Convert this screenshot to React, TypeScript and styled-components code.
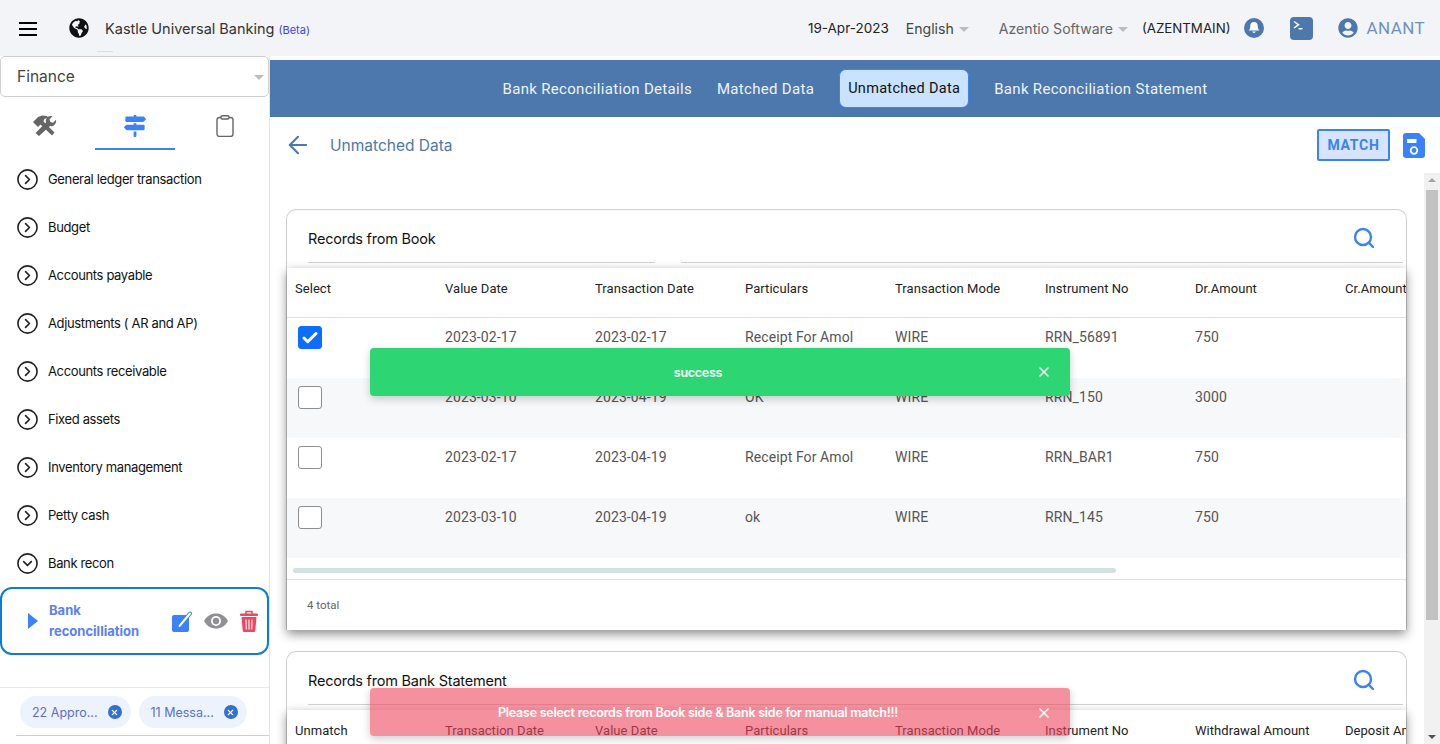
import * as React from 'react';
import styled, { createGlobalStyle } from 'styled-components';
import { FaGlobeAmericas, FaMapSigns, FaUserCircle } from 'react-icons/fa';
import { ArrowLeft, Check, CircleChevronDown, CircleChevronRight, Search, X } from 'lucide-react';

const GlobalStyle = createGlobalStyle`
  html, body {
    margin: 0;
    height: 100%;
    overflow: hidden;
    background: #fff;
    font-family: 'Roboto', 'Liberation Sans', sans-serif;
  }
  * { box-sizing: border-box; }
`;

const Page = styled.div`
  position: relative;
  width: 1440px;
  height: 744px;
  overflow: hidden;
  display: flex;
  flex-direction: column;
`;

const Header = styled.header`
  position: relative;
  flex: 0 0 56px;
  background: #f3f4f8;
  display: flex;
  align-items: center;
  padding: 0 15px 0 19px;
  &::after {
    content: '';
    position: absolute;
    left: 97px;
    top: 51px;
    width: 16px;
    height: 1px;
    background: #dcdcdc;
  }
`;

const Burger = styled.div`
  width: 18px;
  height: 14px;
  margin-top: 1px;
  border-top: 2px solid #000;
  border-bottom: 2px solid #000;
  position: relative;
  &::after {
    content: '';
    position: absolute;
    left: 0;
    right: 0;
    top: 4px;
    height: 2px;
    background: #000;
  }
`;

const Globe = styled.span`
  display: flex;
  margin-left: 32px;
  font-size: 20px;
  color: #111;
`;

const Brand = styled.div`
  margin-left: 16px;
  font-family: 'Inter', sans-serif;
  font-size: 14.5px;
  color: #333;
  white-space: nowrap;
  small {
    margin-left: 4px;
    font-size: 11px;
    color: #3f3ff0;
  }
`;

const HeaderRight = styled.div`
  margin-left: auto;
  display: flex;
  align-items: center;
`;

const HeaderText = styled.span<{ $gap: number; $size?: number; $color?: string }>`
  margin-left: ${p => p.$gap}px;
  font-family: 'Inter', sans-serif;
  font-size: ${p => p.$size || 14}px;
  color: ${p => p.$color || '#444'};
  white-space: nowrap;
  display: flex;
  align-items: center;
`;

const Caret = styled.i`
  margin-left: 5px;
  margin-top: 2px;
  width: 0;
  height: 0;
  border-left: 5px solid transparent;
  border-right: 5px solid transparent;
  border-top: 5px solid #bdbdbd;
`;

const IconSlot = styled.span<{ $gap: number; $size: number }>`
  margin-left: ${p => p.$gap}px;
  display: flex;
  font-size: ${p => p.$size}px;
  color: #4d78ad;
`;

const Username = styled.span`
  margin-left: 9px;
  font-family: 'Roboto', sans-serif;
  font-size: 17px;
  letter-spacing: 0.4px;
  color: #6f92bd;
`;

const Body = styled.div`
  flex: 1;
  min-height: 0;
  display: flex;
`;

const Sidebar = styled.aside`
  flex: 0 0 270px;
  min-width: 0;
  border-right: 1px solid #e4e4e4;
  display: flex;
  flex-direction: column;
  position: relative;
`;

const ModuleSelect = styled.div`
  height: 41px;
  width: 100%;
  flex: none;
  background: #fff;
  border: 1px solid #cfcfcf;
  border-radius: 5px;
  padding: 0 4px 0 16px;
  display: flex;
  align-items: center;
  justify-content: space-between;
  font-family: 'Inter', sans-serif;
  font-size: 15.5px;
  color: #444;
`;

const SideTabs = styled.div`
  display: flex;
  height: 53px;
  flex: none;
`;

const SideTab = styled.div<{ $active?: boolean }>`
  flex: none;
  width: 80px;
  height: 53px;
  margin: 0 5px;
  display: flex;
  justify-content: center;
  padding-top: 18px;
  font-size: 22px;
  color: ${p => (p.$active ? '#3b82f6' : '#666')};
  border-bottom: 2px solid ${p => (p.$active ? '#3b82f6' : 'transparent')};
`;

const MenuList = styled.div`
  padding-top: 5px;
  flex: none;
`;

const MenuRow = styled.div`
  height: 48px;
  display: flex;
  align-items: center;
  padding-left: 16px;
  gap: 9px;
  font-family: 'Inter', sans-serif;
  font-size: 13px;
  letter-spacing: -0.36px;
  color: #111;
  svg { color: #222; flex: none; }
`;

const ActiveItem = styled.div`
  height: 68px;
  width: 100%;
  flex: none;
  border: 2px solid #0f7bd4;
  border-radius: 12px;
  display: flex;
  align-items: center;
  padding-left: 26px;
  color: #3b82f6;
`;

const ItemLabel = styled.div`
  margin-left: 11px;
  width: 123px;
  font-family: 'Inter', sans-serif;
  font-weight: 700;
  font-size: 13px;
  line-height: 21px;
  color: #5b80f5;
`;

const ItemActions = styled.div`
  display: flex;
  align-items: center;
  gap: 12px;
  svg { display: block; }
`;

const Play = styled.i`
  width: 0;
  height: 0;
  border-top: 8px solid transparent;
  border-bottom: 8px solid transparent;
  border-left: 10px solid #3b82f6;
`;

const SideFooter = styled.div`
  margin-top: auto;
  height: 57px;
  border-top: 1px solid #e8e8e8;
  padding: 8px 0 0 20px;
  display: flex;
  gap: 8px;
  position: relative;
  &::after {
    content: '';
    position: absolute;
    left: 16px;
    right: 0;
    bottom: 8px;
    height: 1px;
    background: #cfcfcf;
  }
`;

const Chip = styled.div`
  height: 32px;
  border-radius: 16px;
  background: #edf3fd;
  padding: 0 9px 0 12px;
  display: flex;
  align-items: center;
  gap: 10px;
  font-family: 'Inter', sans-serif;
  font-size: 12.5px;
  color: #5a6fd8;
`;

const ChipClose = styled.span`
  width: 14px;
  height: 14px;
  border-radius: 50%;
  background: #2f6fd6;
  display: flex;
  align-items: center;
  justify-content: center;
  color: #fff;
`;

const Main = styled.main`
  flex: 1;
  min-width: 0;
  display: flex;
  flex-direction: column;
  padding-top: 4px;
`;

const TabBar = styled.nav`
  flex: 0 0 57px;
  background: #4d78ad;
  display: flex;
  align-items: center;
  justify-content: center;
  gap: 25px;
`;

const TabItem = styled.div<{ $active?: boolean }>`
  height: 39px;
  padding: ${p => (p.$active ? '0 8px' : '0')};
  display: flex;
  align-items: center;
  border-radius: 7px;
  font-family: 'Roboto', sans-serif;
  font-size: ${p => (p.$active ? '14.5px' : '15px')};
  letter-spacing: ${p => (p.$active ? '0.3px' : '0.31px')};
  color: ${p => (p.$active ? '#111' : '#eef3f9')};
  background: ${p => (p.$active ? '#c9e2fd' : 'transparent')};
  border: ${p => (p.$active ? '1px solid #3b82f6' : 'none')};
`;

const TitleBar = styled.div`
  flex: 0 0 56px;
  display: flex;
  align-items: center;
  padding: 0 15px 0 14px;
  color: #4d78ad;
`;

const PageTitle = styled.h1`
  margin: 0 0 0 18px;
  font-family: 'Inter', sans-serif;
  font-weight: 400;
  font-size: 15.5px;
  color: #4d78ad;
`;

const MatchButton = styled.button`
  margin-left: auto;
  width: 73px;
  height: 32px;
  padding: 0;
  border: 2px solid #3b82f6;
  border-radius: 2px;
  background: #d6e4fd;
  font-family: 'Roboto', sans-serif;
  font-weight: 700;
  font-size: 14px;
  letter-spacing: 0.75px;
  color: #3b82f6;
`;

const SaveSlot = styled.span`
  display: flex;
  margin-left: 13px;
`;

const ContentRow = styled.div`
  flex: 1;
  min-height: 0;
  display: flex;
`;

const ScrollArea = styled.div`
  flex: 1;
  min-width: 0;
  overflow: hidden;
  padding: 36px 17px 0 16px;
`;

const Scrollbar = styled.div`
  flex: 0 0 16px;
  background: #f1f1f1;
  display: flex;
  flex-direction: column;
  align-items: center;
  padding-top: 5px;
  position: relative;
  &::before {
    content: '';
    border-left: 4px solid transparent;
    border-right: 4px solid transparent;
    border-bottom: 4px solid #a3a3a3;
  }
  &::after {
    content: '';
    position: absolute;
    bottom: 5px;
    border-left: 4px solid transparent;
    border-right: 4px solid transparent;
    border-top: 4px solid #505050;
  }
`;

const ScrollThumb = styled.div`
  margin-top: 8px;
  width: 12px;
  height: 430px;
  background: #c1c1c1;
`;

const Card = styled.section`
  border: 1px solid #cfcfcf;
  border-radius: 10px 10px 0 0;
  border-bottom: none;
  margin-bottom: 21px;
`;

const CardHead = styled.div`
  height: 53px;
  padding: 0 3px 0 21px;
  display: flex;
  flex-direction: column;
`;

const CardTitleRow = styled.div`
  flex: 1;
  display: flex;
  align-items: center;
  justify-content: space-between;
  padding: 4px 27px 0 0;
  font-family: 'Inter', sans-serif;
  font-size: 14.5px;
  letter-spacing: -0.22px;
  color: #111;
  svg { color: #3b82f6; }
`;

const CardRule = styled.div`
  display: flex;
  gap: 26px;
  div {
    height: 1px;
    background: #cfcfcf;
  }
  div:first-child { width: 347px; }
  div:last-child { flex: 1; }
`;

const TableSheet = styled.div`
  margin-top: 5px;
  background: #fff;
  box-shadow: 0 4px 10px rgba(0, 0, 0, 0.45);
  overflow: hidden;
`;

const Row = styled.div<{ $shade?: boolean; $head?: boolean }>`
  display: grid;
  grid-template-columns: repeat(8, 150px);
  height: ${p => (p.$head ? '50px' : '60px')};
  background: ${p => (p.$shade ? '#f7f8fa' : '#fff')};
  border-bottom: ${p => (p.$head ? '1px solid #e0e0e0' : 'none')};
  font-size: ${p => (p.$head ? '13px' : '14px')};
  letter-spacing: ${p => (p.$head ? '0.05px' : '0.1px')};
  color: ${p => (p.$head ? '#222' : '#555')};
`;

const Cell = styled.div<{ $head?: boolean }>`
  padding: ${p => (p.$head ? '13px' : '11px')} 8px 0;
  white-space: nowrap;
  overflow: hidden;
`;

const CheckBox = styled.span<{ $checked?: boolean }>`
  display: flex;
  align-items: center;
  justify-content: center;
  width: 24px;
  height: 23px;
  margin: -3px 0 0 3px;
  border-radius: 3px;
  border: 1px solid ${p => (p.$checked ? '#0d6efd' : '#8e8e8e')};
  background: ${p => (p.$checked ? '#0d6efd' : '#fff')};
  color: #fff;
`;

const HScrollTrack = styled.div`
  height: 22px;
  border-bottom: 1px solid #e0e0e0;
  padding: 10px 0 0 6px;
`;

const HScrollThumb = styled.div`
  width: 823px;
  height: 5px;
  border-radius: 3px;
  background: #d5dee0;
`;

const TableFoot = styled.div`
  height: 50px;
  display: flex;
  align-items: center;
  padding-left: 20px;
  font-size: 11.5px;
  color: #666;
`;

const Toast = styled.div<{ $kind: 'ok' | 'err' }>`
  position: absolute;
  left: 370px;
  top: ${p => (p.$kind === 'ok' ? '348px' : '688px')};
  width: 700px;
  height: 48px;
  border-radius: 4px;
  display: flex;
  align-items: ${p => (p.$kind === 'ok' ? 'center' : 'flex-start')};
  justify-content: center;
  padding: ${p => (p.$kind === 'ok' ? '0 44px 0 0' : '17px 44px 0 0')};
  background: ${p => (p.$kind === 'ok' ? '#2ed573' : 'rgba(238, 72, 93, 0.6)')};
  box-shadow: 0 3px 8px rgba(0, 0, 0, 0.2);
  font-family: 'Inter', sans-serif;
  font-weight: 600;
  font-size: 12.5px;
  letter-spacing: -0.25px;
  color: #fff;
  svg {
    position: absolute;
    right: 18px;
    top: ${p => (p.$kind === 'ok' ? '16px' : '17px')};
  }
`;

const bookColumns = ['Select', 'Value Date', 'Transaction Date', 'Particulars', 'Transaction Mode', 'Instrument No', 'Dr.Amount', 'Cr.Amount'];
const bankColumns = ['Unmatch', 'Transaction Date', 'Value Date', 'Particulars', 'Transaction Mode', 'Instrument No', 'Withdrawal Amount', 'Deposit Amount'];

const bookRows = [
  { checked: true, cells: ['2023-02-17', '2023-02-17', 'Receipt For Amol', 'WIRE', 'RRN_56891', '750', ''] },
  { checked: false, cells: ['2023-03-10', '2023-04-19', 'OK', 'WIRE', 'RRN_150', '3000', ''] },
  { checked: false, cells: ['2023-02-17', '2023-04-19', 'Receipt For Amol', 'WIRE', 'RRN_BAR1', '750', ''] },
  { checked: false, cells: ['2023-03-10', '2023-04-19', 'ok', 'WIRE', 'RRN_145', '750', ''] },
];

const menuItems = [
  'General ledger transaction',
  'Budget',
  'Accounts payable',
  'Adjustments ( AR and AP)',
  'Accounts receivable',
  'Fixed assets',
  'Inventory management',
  'Petty cash',
];

const tabs = ['Bank Reconciliation Details', 'Matched Data', 'Unmatched Data', 'Bank Reconciliation Statement'];

const BellIcon = () => (
  <svg width="20" height="20" viewBox="0 0 20 20">
    <circle cx="10" cy="10" r="10" fill="#4d78ad" />
    <path d="M10 4c-2.4 0-3.7 1.7-3.7 3.9 0 2.7-1 3.7-1.8 4.6h11c-.8-.9-1.8-1.9-1.8-4.6C13.700 5.700 12.400 4 10 4z" fill="#fff" />
    <path d="M8.200 13.600a1.900 1.900 0 0 0 3.600 0z" fill="#fff" />
  </svg>
);

const TerminalIcon = () => (
  <svg width="23" height="23" viewBox="0 0 23 23">
    <rect width="23" height="23" rx="4" fill="#4d78ad" />
    <path d="M4 4.500l4.500 3.200L4 11" fill="none" stroke="#fff" strokeWidth="1.500" />
    <path d="M8.500 11.700h4" stroke="#fff" strokeWidth="1.500" />
  </svg>
);

const SaveIcon = () => (
  <svg width="22" height="25" viewBox="0 0 22 25">
    <path d="M3 0h13l6 6v16a3 3 0 0 1-3 3H3a3 3 0 0 1-3-3V3a3 3 0 0 1 3-3z" fill="#3b82f6" />
    <rect x="4" y="6" width="9.500" height="4" rx="0.500" fill="#fff" />
    <circle cx="11" cy="17.500" r="3.300" fill="none" stroke="#fff" strokeWidth="1.800" />
  </svg>
);

const EditIcon = () => (
  <svg width="20" height="21" viewBox="0 0 20 21">
    <rect x="0" y="4" width="17" height="17" rx="2" fill="#3b82f6" />
    <path d="M7.500 15L18 2.500" stroke="#3b82f6" strokeWidth="4" strokeLinecap="round" />
    <path d="M7.500 15L18 2.500" stroke="#fff" strokeWidth="2" strokeLinecap="round" />
  </svg>
);

const EyeIcon = () => (
  <svg width="24" height="16" viewBox="0 0 24 16">
    <path d="M0 8C5-2 19-2 24 8 19 18 5 18 0 8z" fill="#8f8f95" />
    <circle cx="12" cy="8" r="5" fill="#fff" />
    <circle cx="12" cy="8" r="3.200" fill="#8f8f95" />
  </svg>
);

const TrashIcon = () => (
  <svg width="18" height="22" viewBox="0 0 18 22">
    <path d="M6 4V1.500h6V4" fill="none" stroke="#ee4760" strokeWidth="1.500" />
    <rect x="0" y="3.500" width="18" height="2.500" rx="1" fill="#ee4760" />
    <path d="M1.500 7h15l-1.200 13.500a1.500 1.500 0 0 1-1.500 1.500H4.200a1.500 1.500 0 0 1-1.500-1.500z" fill="#ee4760" />
    <path d="M6 9.500l.4 10M9 9.500v10M12 9.500l-.4 10" stroke="#fff" strokeWidth="1.300" opacity="0.85" />
  </svg>
);

const ToolsIcon = () => (
  <svg width="24" height="22" viewBox="0 0 24 22" fill="#666">
    <path d="M0 7l5-5 4-1.500 5 .5 1.500 2-4 .8-1 2.700 11 11-2.500 3L7.500 9.500 5 12z" />
    <path d="M2.500 18L13 7.500c-.8-3 1-6.500 5-6.500l1.500.3-3 3 .8 2.700 2.700.8 3-3c.8 4-2.500 7.200-6 6.300L6 21z" />
  </svg>
);

const ClipboardIcon = () => (
  <svg width="18" height="22" viewBox="0 0 18 22" fill="none" stroke="#666" strokeWidth="1.400">
    <rect x="1" y="2.500" width="16" height="19" rx="2.500" />
    <rect x="5" y="0.700" width="8" height="3.300" rx="1.200" fill="#fff" />
  </svg>
);

const Records: React.FC<{ title: string; children: React.ReactNode }> = ({ title, children }) => (
  <Card>
    <CardHead>
      <CardTitleRow>
        {title}
        <Search size={24} strokeWidth={2.4} />
      </CardTitleRow>
      <CardRule>
        <div />
        <div />
      </CardRule>
    </CardHead>
    <TableSheet>{children}</TableSheet>
  </Card>
);

const HeadRow: React.FC<{ columns: string[] }> = ({ columns }) => (
  <Row $head>
    {columns.map(c => (
      <Cell $head key={c}>
        {c}
      </Cell>
    ))}
  </Row>
);

const App: React.FC = () => {
  return (
    <Page>
      <GlobalStyle />
      <Header>
        <Burger />
        <Globe>
          <FaGlobeAmericas />
        </Globe>
        <Brand>
          Kastle Universal Banking<small>(Beta)</small>
        </Brand>
        <HeaderRight>
          <HeaderText $gap={0} $size={13.5} $color="#222">
            19-Apr-2023
          </HeaderText>
          <HeaderText $gap={17} $size={14.1}>
            English
            <Caret />
          </HeaderText>
          <HeaderText $gap={30} $size={14.1} $color="#666">
            Azentio Software
            <Caret />
          </HeaderText>
          <HeaderText $gap={14} $size={13.3} $color="#222">
            (AZENTMAIN)
          </HeaderText>
          <IconSlot $gap={13} $size={20}>
            <BellIcon />
          </IconSlot>
          <IconSlot $gap={26} $size={23}>
            <TerminalIcon />
          </IconSlot>
          <IconSlot $gap={25} $size={20}>
            <FaUserCircle />
          </IconSlot>
          <Username>ANANT</Username>
        </HeaderRight>
      </Header>
      <Body>
        <Sidebar>
          <ModuleSelect>
            Finance
            <Caret />
          </ModuleSelect>
          <SideTabs>
            <SideTab>
              <ToolsIcon />
            </SideTab>
            <SideTab $active>
              <FaMapSigns />
            </SideTab>
            <SideTab>
              <ClipboardIcon />
            </SideTab>
          </SideTabs>
          <MenuList>
            {menuItems.map(item => (
              <MenuRow key={item}>
                <CircleChevronRight size={23} strokeWidth={1.7} />
                {item}
              </MenuRow>
            ))}
            <MenuRow>
              <CircleChevronDown size={23} strokeWidth={1.7} />
              Bank recon
            </MenuRow>
          </MenuList>
          <ActiveItem>
            <Play />
            <ItemLabel>Bank reconcilliation</ItemLabel>
            <ItemActions>
              <EditIcon />
              <EyeIcon />
              <TrashIcon />
            </ItemActions>
          </ActiveItem>
          <SideFooter>
            <Chip>
              22 Appro...
              <ChipClose>
                <X size={9} strokeWidth={3} />
              </ChipClose>
            </Chip>
            <Chip>
              11 Messa...
              <ChipClose>
                <X size={9} strokeWidth={3} />
              </ChipClose>
            </Chip>
          </SideFooter>
        </Sidebar>
        <Main>
          <TabBar>
            {tabs.map(t => (
              <TabItem key={t} $active={t === 'Unmatched Data'}>
                {t}
              </TabItem>
            ))}
          </TabBar>
          <TitleBar>
            <ArrowLeft size={28} strokeWidth={1.8} />
            <PageTitle>Unmatched Data</PageTitle>
            <MatchButton>MATCH</MatchButton>
            <SaveSlot>
              <SaveIcon />
            </SaveSlot>
          </TitleBar>
          <ContentRow>
            <ScrollArea>
              <Records title="Records from Book">
                <HeadRow columns={bookColumns} />
                {bookRows.map((r, i) => (
                  <Row key={i} $shade={i % 2 === 1}>
                    <Cell>
                      <CheckBox $checked={r.checked}>{r.checked && <Check size={18} strokeWidth={4} />}</CheckBox>
                    </Cell>
                    {r.cells.map((c, j) => (
                      <Cell key={j}>{c}</Cell>
                    ))}
                  </Row>
                ))}
                <HScrollTrack>
                  <HScrollThumb />
                </HScrollTrack>
                <TableFoot>4 total</TableFoot>
              </Records>
              <Records title="Records from Bank Statement">
                <HeadRow columns={bankColumns} />
              </Records>
            </ScrollArea>
            <Scrollbar>
              <ScrollThumb />
            </Scrollbar>
          </ContentRow>
        </Main>
      </Body>
      <Toast $kind="ok">
        success
        <X size={16} strokeWidth={2} />
      </Toast>
      <Toast $kind="err">
        Please select records from Book side &amp; Bank side for manual match!!!
        <X size={16} strokeWidth={2} />
      </Toast>
    </Page>
  );
};

export default App;
